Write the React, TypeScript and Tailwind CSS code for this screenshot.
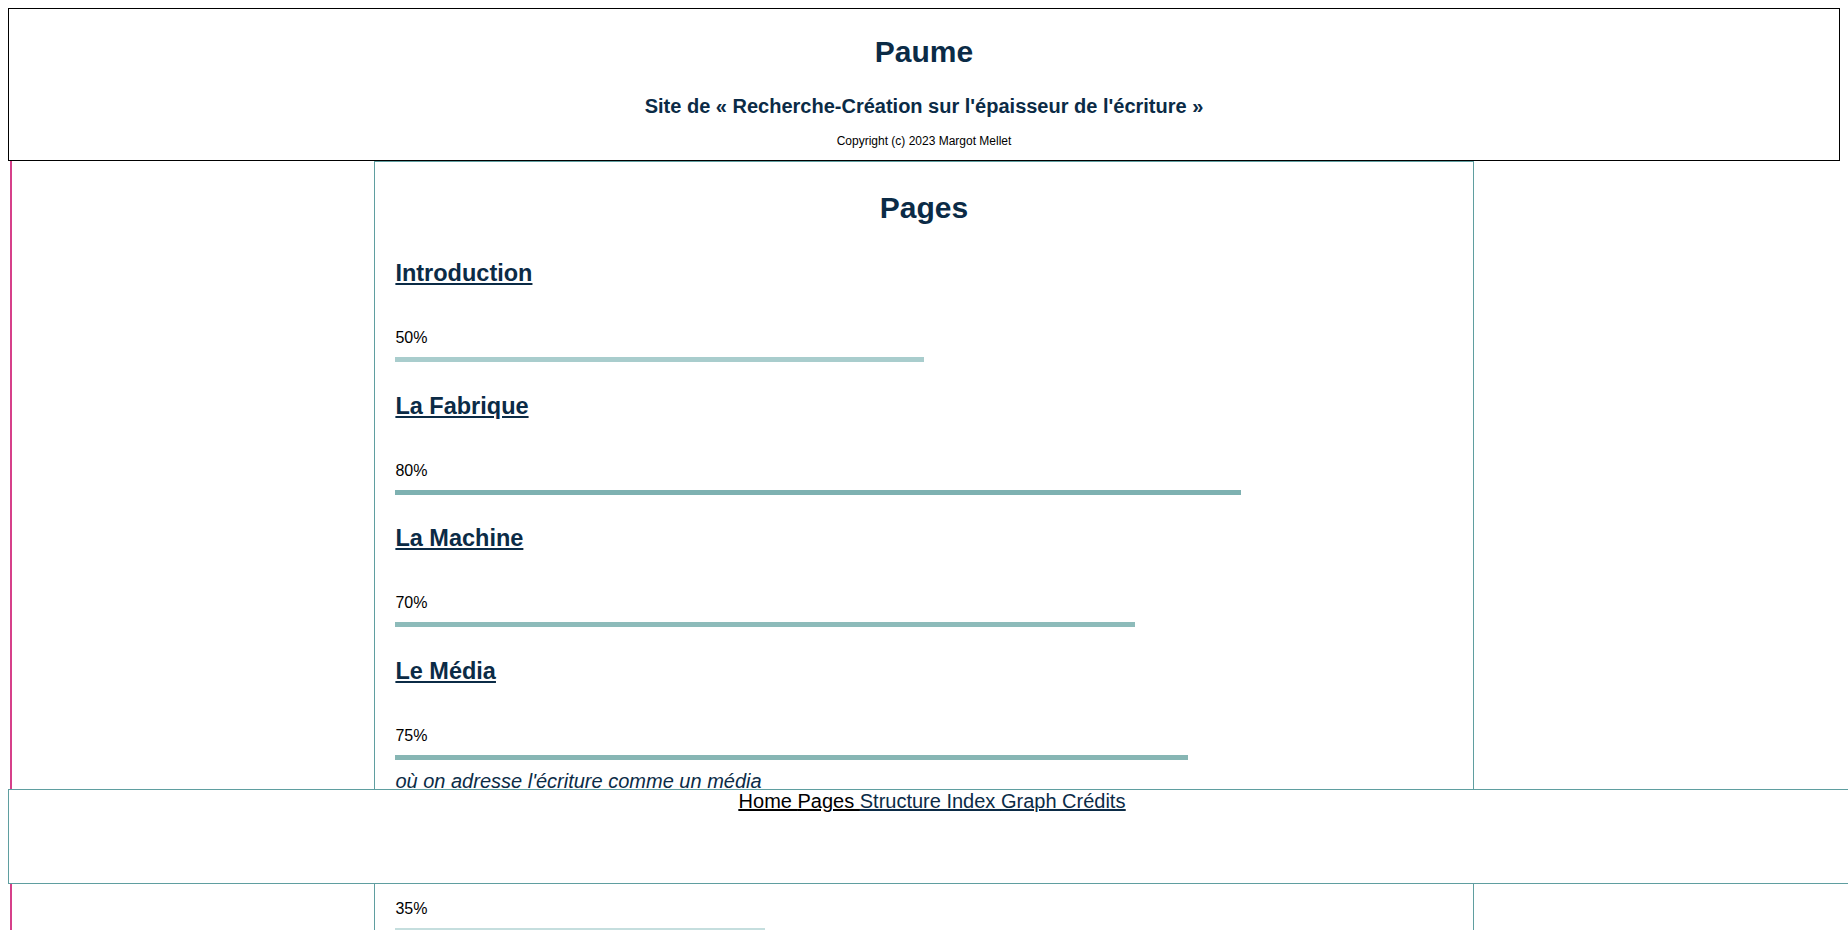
import React from "react";

type Section = { title: string; pct: number; color: string; desc?: string };

const sections: Section[] = [
  { title: "Introduction", pct: 50, color: "bg-[#a9cdcd]" },
  { title: "La Fabrique", pct: 80, color: "bg-[#7eb1b1]" },
  { title: "La Machine", pct: 70, color: "bg-[#8dbbba]" },
  { title: "Le Média", pct: 75, color: "bg-[#87b6b4]", desc: "où on adresse l'écriture comme un média" },
  { title: "Le Texte", pct: 35, color: "bg-[#c5dede]" },
  { title: "Conclusion", pct: 20, color: "bg-[#d6e8e8]" },
];

export default function App() {
  return (
    <div className="p-2 bg-white text-black font-['Liberation_Sans',Arial,sans-serif]">
      <header className="h-[153px] border border-black text-center">
        <h1 className="pt-[26px] text-[30px] leading-[34px] font-bold text-[#0b2b46]">Paume</h1>
        <h3 className="mt-[25.5px] text-[20px] leading-[23px] font-bold text-[#0b2b46]">
          Site de « Recherche-Création sur l'épaisseur de l'écriture »
        </h3>
        <p className="mt-[16px] text-[12px] leading-[14px]">Copyright (c) 2023 Margot Mellet</p>
      </header>

      <div className="grid grid-cols-[20%_60%_20%]">
        <div className="flex">
          <div className="ml-[2px] w-[2px] bg-[#d6408a]" />
        </div>
        <main className="border-x border-t border-[#5f9ea0] px-5 pb-10">
          <h1 className="mt-[29px] text-center text-[30px] leading-[34px] font-bold text-[#0b2b46]">Pages</h1>
          <div className="mt-[34px] flex flex-col">
            {sections.map((s, i) => (
              <section key={s.title} className={i === 0 ? "" : "mt-[29.5px]"}>
                <h2 className="text-[23.5px] leading-[28px] font-bold text-[#0b2b46]">
                  <a className="underline">{s.title}</a>
                </h2>
                <p className="mt-[42px] text-[16px] leading-[18px]">{s.pct}%</p>
                <div className="mt-[10px] h-[5px]">
                  <div className={`h-[5px] ${s.color}`} style={{ width: `${s.pct}%` }} />
                </div>
                {s.desc && (
                  <p className="mt-[10px] mb-[8px] text-[20px] leading-[23px] italic text-[#0b2b46]">{s.desc}</p>
                )}
              </section>
            ))}
          </div>
        </main>
        <div />
      </div>

      <nav className="fixed left-2 top-[789px] h-[95px] w-full border border-[#5f9ea0] bg-white text-center text-[20px] leading-[23px]">
        <span className="underline">
          <a className="text-black">Home </a>
          <a className="text-black">Pages </a>
          <a className="text-[#0b2b46]">Structure </a>
          <a className="text-[#0b2b46]">Index </a>
          <a className="text-[#0b2b46]">Graph </a>
          <a className="text-[#0b2b46]">Crédits</a>
        </span>
      </nav>
    </div>
  );
}
